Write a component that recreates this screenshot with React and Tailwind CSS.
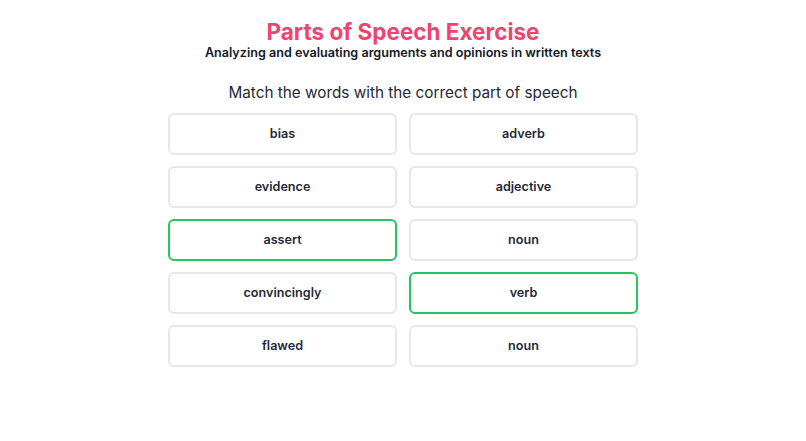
import React from "react";

const left = ["bias", "evidence", "assert", "convincingly", "flawed"];
const right = ["adverb", "adjective", "noun", "verb", "noun"];
const greenLeft = 2;
const greenRight = 3;

export default function App() {
  const items = [];
  for (let i = 0; i < 5; i++) {
    items.push({ t: left[i], g: i === greenLeft, k: "l" + i });
    items.push({ t: right[i], g: i === greenRight, k: "r" + i });
  }
  return (
    <div
      className="w-[806px] h-[441px] bg-white flex flex-col items-center"
      style={{ fontFamily: "Inter, 'Noto Sans', sans-serif" }}
    >
      <h1 className="mt-[18px] text-[22.5px] leading-[27px] font-bold text-[#ef4470]">
        Parts of Speech Exercise
      </h1>
      <p className="text-[12.6px] leading-[16px] font-semibold text-[#111827]">
        Analyzing and evaluating arguments and opinions in written texts
      </p>
      <p className="mt-[21px] text-[15.3px] leading-[22px] text-[#1f2937]">
        Match the words with the correct part of speech
      </p>
      <div className="mt-[9px] w-[470px] grid grid-cols-2 gap-x-3 gap-y-[11px]">
        {items.map((it) => (
          <div
            key={it.k}
            className={
              "h-[42px] rounded-md border-2 bg-white flex items-center justify-center text-[12.6px] font-semibold text-[#1f2937] " +
              (it.g ? "border-[#22c55e]" : "border-[#e5e7eb]")
            }
          >
            {it.t}
          </div>
        ))}
      </div>
    </div>
  );
}
